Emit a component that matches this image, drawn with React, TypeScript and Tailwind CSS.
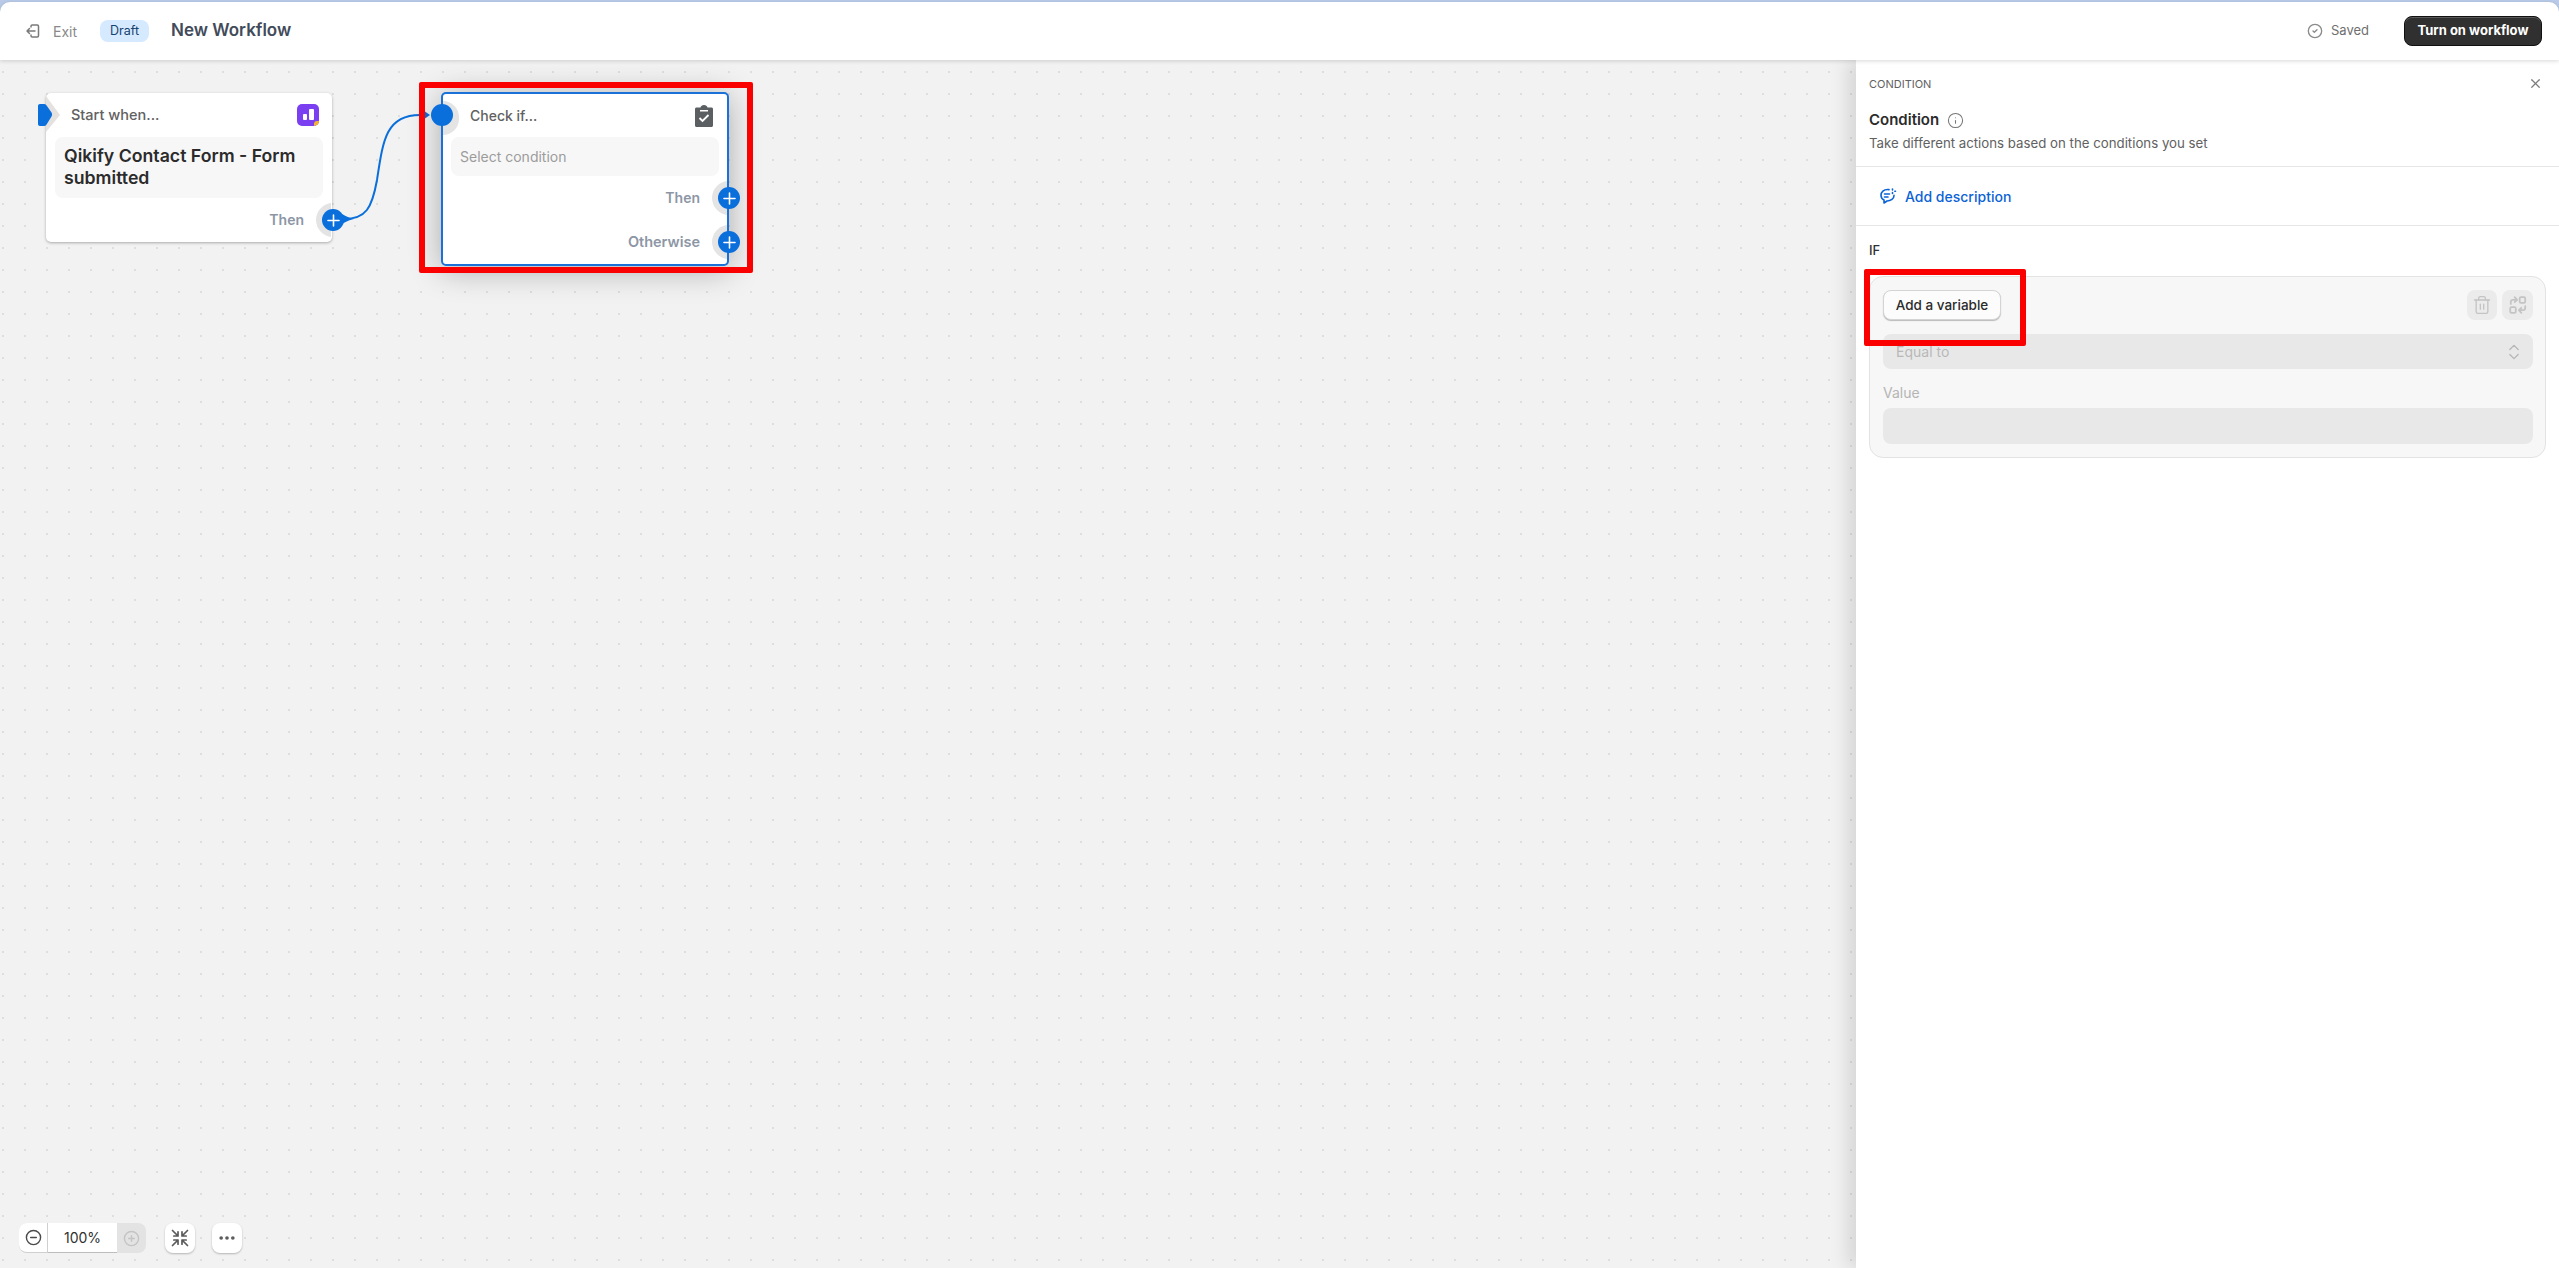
import { ChevronsUpDown, CircleCheck, CircleMinus, CirclePlus, Ellipsis, Info, Plus, Trash2, X } from "lucide-react";

function ExitIcon() {
  return (
    <svg width="16" height="16" viewBox="0 0 16 16" fill="none" stroke="#7a7a7a" strokeWidth="1.5" strokeLinecap="round" strokeLinejoin="round">
      <path d="M6 4V3.2C6 2.5 6.5 2 7.2 2H12.3C13 2 13.5 2.5 13.5 3.2V12.8C13.5 13.5 13 14 12.3 14H7.2C6.5 14 6 13.5 6 12.8V12" />
      <path d="M10 8H2M4.5 5.5L2 8L4.5 10.5" />
    </svg>
  );
}

function FitIcon() {
  return (
    <svg width="20" height="20" viewBox="0 0 20 20" fill="none" stroke="#5a5a5a" strokeWidth="1.7" strokeLinecap="round" strokeLinejoin="round">
      <path d="M2.5 2.5L8 8M8 3.8V8H3.8" />
      <path d="M17.5 2.5L12 8M12 3.8V8H16.2" />
      <path d="M2.5 17.5L8 12M8 16.2V12H3.8" />
      <path d="M17.5 17.5L12 12M12 16.2V12H16.2" />
    </svg>
  );
}

function SwapIcon() {
  return (
    <svg width="20" height="20" viewBox="0 0 18 18" fill="none" stroke="#c4c4c4" strokeWidth="1.6" strokeLinecap="round" strokeLinejoin="round">
      <rect x="10.5" y="2" width="5" height="5" rx="1.2" />
      <rect x="2" y="11" width="5" height="5" rx="1.2" />
      <path d="M2.5 8V6.2C2.5 5 3.4 4.3 4.5 4.3H8M6 2L8.2 4.3L6 6.5" />
      <path d="M15.5 10V11.8C15.5 13 14.6 13.7 13.5 13.7H10M12 11.5L9.8 13.7L12 16" />
    </svg>
  );
}

function DescriptionIcon() {
  return (
    <svg width="18" height="18" viewBox="0 0 18 18" fill="none" stroke="#0b63d6" strokeWidth="1.6" strokeLinecap="round" strokeLinejoin="round">
      <path d="M10 2.6C9.5 2.5 9 2.5 8.5 2.5C4.9 2.5 2 4.9 2 8.2C2 10.3 3.2 12 5 13V16L8 14C11.8 14 15 11.8 15 8.4" />
      <path d="M5.5 7H10.5M5.5 10H9" />
      <path d="M13.5 2V3M13.5 5.5V6.5M15.8 4.2H16.5" />
    </svg>
  );
}

function ClipboardIcon() {
  return (
    <svg width="18" height="22" viewBox="0 0 18 22">
      <path fill="#5c5f62" d="M1.5 2.5H5.5C5.8 1.2 7.2 0 9 0S12.2 1.2 12.5 2.5H16.500C17.300 2.500 18 3.200 18 4V20.500C18 21.300 17.300 22 16.500 22H1.500C0.700 22 0 21.300 0 20.500V4C0 3.200 0.700 2.500 1.500 2.500Z" />
      <path fill="#ffffff" d="M5 5H13V6.500H5Z" />
      <path fill="none" stroke="#ffffff" strokeWidth="1.8" d="M4.500 13L7.500 16L13.500 10" />
    </svg>
  );
}

function QikifyLogo() {
  return (
    <div className="relative flex h-[22px] w-[22px] items-end justify-center gap-[2px] overflow-hidden rounded-[5px] bg-[#7a3ff0] pb-[6px]">
      <span className="h-[6px] w-[4px] rounded-[1px] bg-white" />
      <span className="h-[11px] w-[5px] rounded-[1px] bg-white" />
      <span className="absolute bottom-0 right-0 h-[5px] w-[5px] rounded-tl-[3px] bg-[#f1b434]" />
    </div>
  );
}

function AddHandle({ className }: { className: string }) {
  return (
    <div className={`absolute h-[34px] w-[28px] ${className}`}>
      <span className="absolute left-0 top-0 block h-[34px] w-[15px] overflow-hidden">
        <span className="block h-[34px] w-[34px] rounded-full bg-[#e4e4e4]" />
      </span>
      <span className="absolute left-[6px] top-[6px] flex h-[22px] w-[22px] items-center justify-center rounded-full bg-[#0a6edb] text-white">
        <Plus size={19} strokeWidth={2} />
      </span>
    </div>
  );
}

function StartNode() {
  return (
    <div className="absolute left-[46px] top-[33px] h-[149px] w-[286px] rounded-[5px] bg-white shadow-[0_1px_3px_rgba(0,0,0,0.3)]">
      <svg className="absolute -left-[9px] top-[3px]" width="24" height="38" viewBox="0 0 24 38">
        <path fill="#e4e1de" d="M9 0L23 19L9 36Z" />
        <path fill="#0a6edb" d="M1 10C1 8.800 1.800 8 3 8H7C8 8 8.800 8.400 9.400 9.200L14.500 16.500C15.300 17.700 15.300 19.300 14.500 20.500L9.400 28.800C8.800 29.600 8 30 7 30H3C1.800 30 1 29.200 1 28Z" />
      </svg>
      <div className="flex h-[44px] items-center justify-between pl-[25px] pr-[13px]">
        <span className="text-[14.5px] font-medium text-[#616161]">Start when...</span>
        <QikifyLogo />
      </div>
      <div className="mx-[9px] h-[61px] rounded-[8px] bg-[#f7f7f7] px-[9px] py-[8px] text-[17.7px] font-semibold leading-[22px] text-[#2b2b2b]">
        Qikify Contact Form - Form submitted
      </div>
      <div className="pr-[28px] pt-[11px] text-right text-[14px] font-semibold leading-[22px] text-[#8d96a5]">Then</div>
      <AddHandle className="left-[270px] top-[110px]" />
    </div>
  );
}

function ConditionNode() {
  return (
    <div className="absolute left-[441px] top-[32px] h-[174px] w-[288px] rounded-[5px] border-2 border-[#1a72d8] bg-white shadow-[0_4px_32px_rgba(0,0,0,0.3)]">
      <div className="absolute left-0 top-[7px] h-[34px] w-[16px] rounded-r-full bg-[#e4e4e4]" />
      <span className="absolute -left-[12px] top-[10px] h-[22px] w-[22px] rounded-full bg-[#0a6edb]" />
      <div className="flex h-[43px] items-center justify-between pl-[27px] pr-[14px]">
        <span className="text-[14px] font-medium text-[#616161]">Check if...</span>
        <ClipboardIcon />
      </div>
      <div className="mx-[8px] flex h-[39px] items-center rounded-[8px] bg-[#f7f7f7] px-[9px] text-[14px] text-[#9c9c9c]">Select condition</div>
      <div className="pr-[27px] pt-[11px] text-right text-[14px] font-semibold leading-[22px] text-[#8d96a5]">Then</div>
      <div className="pr-[27px] pt-[22px] text-right text-[14.5px] font-semibold leading-[22px] text-[#8d96a5]">Otherwise</div>
      <AddHandle className="left-[269px] top-[87px]" />
      <AddHandle className="left-[269px] top-[131px]" />
    </div>
  );
}

function Connector() {
  return (
    <svg className="absolute left-[330px] top-[40px]" width="110" height="140" viewBox="0 0 110 140" fill="none">
      <path d="M14 119C36 119 42 108 47 80C53 40 56 15 90 15H96" stroke="#0a6edb" strokeWidth="2" />
      <path d="M7 111C12 114 18 118 24 119C18 120 12 124 7 127Z" fill="#0a6edb" />
      <path d="M95 11.500L100 15L95 18.500Z" fill="#0a6edb" />
    </svg>
  );
}

function ZoomBar() {
  return (
    <div className="absolute bottom-[15px] left-[19px] flex items-center">
      <div className="flex h-[30px] items-stretch rounded-[8px] bg-[#e3e3e3]">
        <div className="flex w-[29px] items-center justify-center rounded-l-[8px] border-b border-r border-[#cfcfcf] bg-white">
          <CircleMinus size={17} className="text-[#4a4a4a]" />
        </div>
        <div className="flex w-[69px] items-center justify-center border-b border-[#bdbdbd] bg-white text-[14px] text-[#303030]">100%</div>
        <div className="flex w-[29px] items-center justify-center">
          <CirclePlus size={17} className="text-[#c4c4c4]" />
        </div>
      </div>
      <div className="ml-[19px] flex h-[30px] w-[30px] items-center justify-center rounded-[8px] bg-white shadow-[0_1px_2px_rgba(0,0,0,0.25)]">
        <FitIcon />
      </div>
      <div className="ml-[17px] flex h-[30px] w-[30px] items-center justify-center rounded-[8px] bg-white shadow-[0_1px_2px_rgba(0,0,0,0.25)]">
        <Ellipsis size={20} strokeWidth={2.4} className="text-[#5a5a5a]" />
      </div>
    </div>
  );
}

function TopBar() {
  return (
    <header className="relative z-20 flex h-[58px] shrink-0 items-center justify-between rounded-t-[10px] bg-white pl-[25px] pr-[17px] shadow-[0_1px_4px_rgba(0,0,0,0.16)]">
      <div className="flex items-center">
        <ExitIcon />
        <span className="ml-[12px] text-[14px] text-[#8a8a8a]">Exit</span>
        <span className="ml-[23px] flex h-[22px] w-[49px] items-center justify-center rounded-[8px] bg-[#d5e9ff] text-[12.5px] text-[#15416e]">Draft</span>
        <span className="ml-[22px] text-[17px] font-semibold text-[#424b5a]">New Workflow</span>
      </div>
      <div className="flex items-center">
        <CircleCheck size={16} className="text-[#8a8a8a]" />
        <span className="ml-[8px] text-[13px] text-[#6f6f6f]">Saved</span>
        <button className="ml-[35px] flex h-[30px] w-[138px] items-center justify-center rounded-[8px] border border-[#111111] bg-[#303030] text-[13px] font-bold text-white shadow-[inset_0_1px_0_rgba(255,255,255,0.2)]">
          Turn on workflow
        </button>
      </div>
    </header>
  );
}

function SidePanel() {
  return (
    <aside className="relative z-10 w-[703px] shrink-0 bg-white shadow-[-8px_0_18px_rgba(0,0,0,0.12)]">
      <div className="h-[107px] border-b border-[#e6e6e6] pl-[13px] pr-[16px] pt-[16px]">
        <div className="flex items-center justify-between">
          <span className="text-[11px] uppercase leading-[14px] text-[#616161]">Condition</span>
          <X size={15} className="text-[#7d7d7d]" />
        </div>
        <div className="mt-[19px] flex items-center">
          <span className="text-[15px] font-semibold leading-[20px] text-[#2b2b2b]">Condition</span>
          <Info size={17} strokeWidth={1.5} className="ml-[8px] text-[#777777]" />
        </div>
        <p className="mt-[3px] text-[13.25px] leading-[20px] text-[#616161]">Take different actions based on the conditions you set</p>
      </div>
      <div className="flex h-[59px] items-center gap-[8px] border-b border-[#e6e6e6] pl-[23px] text-[14px] font-medium text-[#0b63d6]">
        <DescriptionIcon />
        <span>Add description</span>
      </div>
      <div className="px-[13px] pt-[15px]">
        <div className="text-[13px] font-medium leading-[18px] text-[#303030]">IF</div>
        <div className="mt-[17px] h-[182px] rounded-[14px] border border-[#e3e3e3] bg-[#f7f7f7] pl-[13px] pr-[12px] pt-[13px]">
          <div className="flex items-center justify-between">
            <button className="flex h-[30px] w-[118px] items-center justify-center rounded-[8px] border border-[#d4d4d4] bg-[#fcfcfc] text-[13.5px] font-medium text-[#2b2b2b] shadow-[0_1px_1px_rgba(0,0,0,0.25)]">
              Add a variable
            </button>
            <div className="flex gap-[5px]">
              <span className="flex h-[30px] w-[30px] items-center justify-center rounded-[8px] bg-[#ebebeb]">
                <Trash2 size={20} strokeWidth={1.6} className="text-[#c4c4c4]" />
              </span>
              <span className="flex h-[30px] w-[31px] items-center justify-center rounded-[8px] bg-[#ebebeb]">
                <SwapIcon />
              </span>
            </div>
          </div>
          <div className="mt-[14px] flex h-[35px] items-center justify-between rounded-[8px] bg-[#e8e8e8] pl-[13px] pr-[9px] text-[14px] text-[#b8b8b8]">
            <span>Equal to</span>
            <ChevronsUpDown size={20} strokeWidth={1.5} className="text-[#b5b5b5]" />
          </div>
          <div className="mt-[14px] text-[14px] leading-[20px] text-[#b5b5b5]">Value</div>
          <div className="mt-[5px] h-[36px] rounded-[8px] bg-[#e8e8e8]" />
        </div>
      </div>
    </aside>
  );
}

export default function App() {
  return (
    <div className="relative flex h-[1268px] w-[2559px] flex-col overflow-hidden bg-[#b9cbe9] pt-[2px] font-['Inter',sans-serif]">
      <TopBar />
      <div className="flex min-h-0 flex-1">
        <main className="relative flex-1 overflow-hidden bg-[#f2f2f2] bg-[radial-gradient(#dedede_1px,transparent_1.2px)] bg-[length:22px_22px] bg-[position:-8px_1px]">
          <Connector />
          <StartNode />
          <ConditionNode />
          <ZoomBar />
        </main>
        <SidePanel />
      </div>
      {/* red annotation boxes */}
      <div className="pointer-events-none absolute left-[419px] top-[82px] z-30 h-[191px] w-[334px] rounded-[2px] border-[6px] border-[#fa0000]" />
      <div className="pointer-events-none absolute left-[1864px] top-[269px] z-30 h-[77px] w-[162px] rounded-[2px] border-[6px] border-[#fa0000]" />
    </div>
  );
}
